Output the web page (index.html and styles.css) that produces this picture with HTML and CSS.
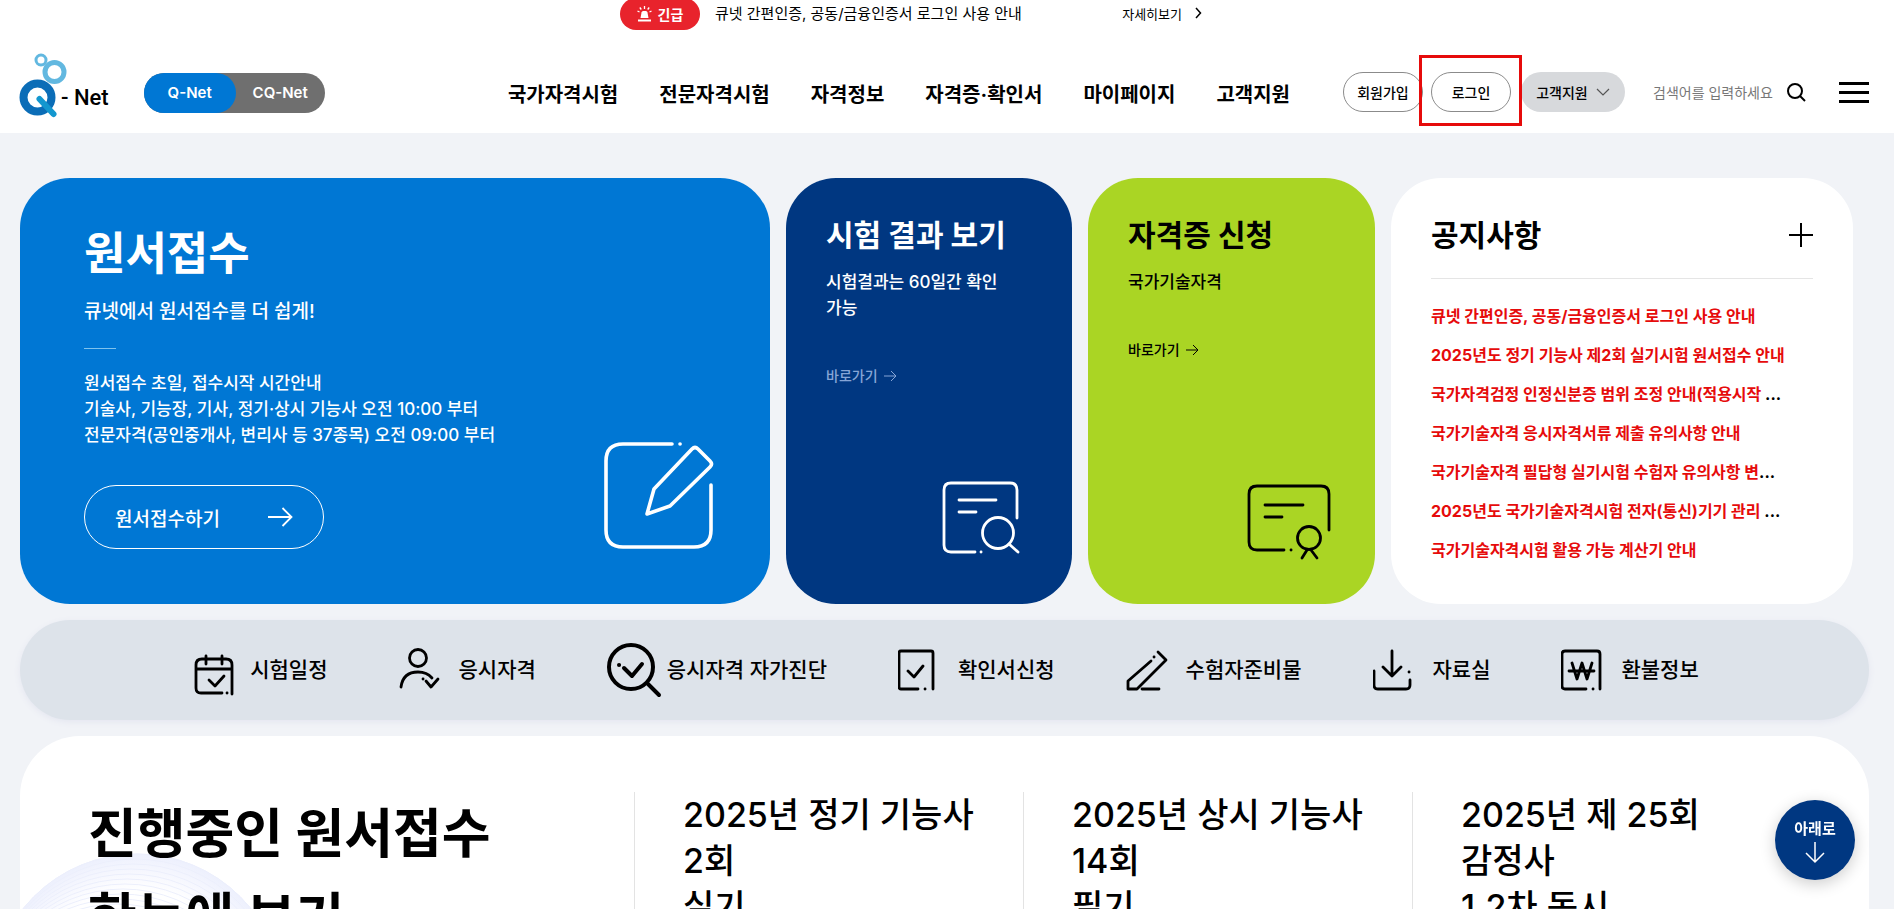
FILE: index.html
```html
<!DOCTYPE html>
<html lang="ko">
<head>
  <meta charset="UTF-8">
  <meta name="viewport" content="width=device-width, initial-scale=1.0">
  <title>Q-Net</title>
  <link rel="stylesheet" href="styles.css">
</head>
<body>
  <div class="top-notice">
    <div class="top-notice-inner">
      <strong class="badge">
        <svg width="15" height="16" viewBox="0 0 15 16" fill="#fff"><path d="M3.5 12l1-5.5q.3-1.5 1.600-1.500h2.800q1.300 0 1.600 1.500l1 5.500z"/><path d="M1 13.500h13v2H1z"/><path d="M7.500 0v3M2.800 1.500l1.500 2M12.200 1.500l-1.500 2M.5 5l2 1M14.500 5l-2 1" stroke="#fff" stroke-width="1.300"/></svg>
        긴급
      </strong>
      <a class="top-notice-text" href="#">큐넷 간편인증, 공동/금융인증서 로그인 사용 안내</a>
      <a class="top-notice-more" href="#">자세히보기
        <svg width="7" height="12" viewBox="0 0 7 12" fill="none" stroke="#000" stroke-width="1.500"><path d="M1 1l4.500 5L1 11"/></svg>
      </a>
    </div>
  </div>

  <header class="header">
    <a class="logo" href="#">
      <svg width="40" height="64" viewBox="0 0 40 64" fill="none">
        <circle cx="21" cy="7" r="5" stroke="#62b8e0" stroke-width="3"/>
        <circle cx="34.500" cy="19" r="9.500" stroke="#62b8e0" stroke-width="5"/>
        <circle cx="17.500" cy="44.500" r="14" stroke="#0b6db7" stroke-width="8"/>
        <path d="M19.500 46l14 15" stroke="#1397cf" stroke-width="6" stroke-linecap="round"/>
      </svg>
      <span>- Net</span>
    </a>
    <div class="site-toggle">
      <a class="active" href="#">Q-Net</a>
      <a href="#">CQ-Net</a>
    </div>
    <nav class="gnb">
      <a href="#">국가자격시험</a>
      <a href="#">전문자격시험</a>
      <a href="#">자격정보</a>
      <a href="#">자격증·확인서</a>
      <a href="#">마이페이지</a>
      <a href="#">고객지원</a>
    </nav>
    <div class="util">
      <button class="pill" type="button">회원가입</button>
      <div class="login"><button class="pill" type="button">로그인</button></div>
      <button class="pill pill-gray" type="button" aria-haspopup="true">고객지원
        <svg width="14" height="8" viewBox="0 0 14 8" fill="none" stroke="#555" stroke-width="1.200"><path d="M1 1l6 6 6-6"/></svg>
      </button>
      <form class="search">
        <input type="text" aria-label="검색어" placeholder="검색어를 입력하세요">
        <button type="submit" aria-label="검색">
          <svg width="19" height="19" viewBox="0 0 19 19" fill="none" stroke="#000" stroke-width="2"><circle cx="8" cy="8" r="7"/><path d="M13 13l5 5"/></svg>
        </button>
      </form>
      <button class="menu" type="button" aria-label="전체메뉴"><span></span><span></span><span></span></button>
    </div>
  </header>

  <main>
    <section class="cards">
      <article class="card card-apply">
        <h2>원서접수</h2>
        <p class="lead">큐넷에서 원서접수를 더 쉽게!</p>
        <p class="desc">원서접수 초일, 접수시작 시간안내<br>기술사, 기능장, 기사, 정기·상시 기능사 오전 10:00 부터<br>전문자격(공인중개사, 변리사 등 37종목) 오전 09:00 부터</p>
        <div class="card-foot">
          <a class="apply-btn" href="#">원서접수하기
            <svg width="25" height="20" viewBox="0 0 25 20" fill="none" stroke="#fff" stroke-width="1.800"><path d="M0 10h23M14.500 1l9 9-9 9"/></svg>
          </a>
          <svg width="110" height="108" viewBox="0 0 110 108" fill="none" stroke="#fff" stroke-width="3.600" stroke-linecap="round" stroke-linejoin="round">
            <path d="M68 3H19Q2 3 2 20v69q0 17 17 17h71q17 0 17-17V44M76 3h.1"/>
            <path d="M88 8q3-3 6 0l12 12q3 3 0 6L66 65l-23 8 7-25z"/>
          </svg>
        </div>
      </article>

      <article class="card card-side card-result">
        <h2>시험 결과 보기</h2>
        <p>시험결과는 60일간 확인<br>가능</p>
        <a class="go" href="#">바로가기
          <svg width="13" height="12" viewBox="0 0 13 12" fill="none" stroke="currentColor"><path d="M0 6h12M7 1l5 5-5 5"/></svg>
        </a>
        <svg class="card-icon" width="78" height="74" viewBox="0 0 78 74" fill="none" stroke="#fff" stroke-width="2.800" stroke-linecap="round">
          <path d="M33 71H9q-7 0-7-7V9q0-7 7-7h59q7 0 7 7v28M39 71h.1M17 19h37M17 31h17"/>
          <circle cx="56" cy="52" r="15.500"/><path d="M67 63l9 8"/>
        </svg>
      </article>

      <article class="card card-side card-license">
        <h2>자격증 신청</h2>
        <p>국가기술자격</p>
        <a class="go" href="#">바로가기
          <svg width="13" height="12" viewBox="0 0 13 12" fill="none" stroke="currentColor"><path d="M0 6h12M7 1l5 5-5 5"/></svg>
        </a>
        <svg class="card-icon" width="84" height="76" viewBox="0 0 84 76" fill="none" stroke="#000" stroke-width="2.800" stroke-linecap="round">
          <path d="M37 66H10q-8 0-8-8V10q0-8 8-8h64q8 0 8 8v36M44 66h.1M18 21h38M18 33h17"/>
          <circle cx="62" cy="54" r="11.500"/><path d="M60 66l-5 8M64 66l6 8"/>
        </svg>
      </article>

      <article class="card card-news">
        <div class="news-head">
          <h2>공지사항</h2>
          <a href="#" aria-label="공지사항 더보기"><svg width="24" height="24" viewBox="0 0 24 24" stroke="#000" stroke-width="2"><path d="M12 0v24M0 12h24"/></svg></a>
        </div>
        <ul>
          <li><a href="#">큐넷 간편인증, 공동/금융인증서 로그인 사용 안내</a></li>
          <li><a href="#">2025년도 정기 기능사 제2회 실기시험 원서접수 안내</a></li>
          <li><a href="#">국가자격검정 인정신분증 범위 조정 안내(적용시작 </a>...</li>
          <li><a href="#">국가기술자격 응시자격서류 제출 유의사항 안내</a></li>
          <li><a href="#">국가기술자격 필답형 실기시험 수험자 유의사항 변</a>...</li>
          <li><a href="#">2025년도 국가기술자격시험 전자(통신)기기 관리 </a>...</li>
          <li><a href="#">국가기술자격시험 활용 가능 계산기 안내</a></li>
        </ul>
      </article>
    </section>

    <nav class="quick">
      <a href="#"><svg width="60" height="60" viewBox="0 0 60 60"><path d="M32 53H11q-5 0-5-5V25q0-6 6-6h24q6 0 6 6v29M6 29h36M16 16v8M32 16v8M37 53h.1M19 40l6 6 9-10"/></svg><span>시험일정</span></a>
      <a href="#"><svg width="60" height="60" viewBox="0 0 60 60"><circle cx="19" cy="18" r="8.500"/><path d="M2 47q2-15 17-15 9 0 14 6M27 41l5 6 7-8M24 39h.1"/></svg><span>응시자격</span></a>
      <a href="#"><svg class="bold" width="60" height="60" viewBox="0 0 60 60"><circle cx="24" cy="27" r="22"/><path d="M41 44l11 11M17 28l8 8 10-12M12 25h.1"/></svg><span>응시자격 자가진단</span></a>
      <a href="#"><svg width="60" height="60" viewBox="0 0 60 60"><path d="M20 49H3q-2 0-2-2V13q0-2 2-2h30q2 0 2 2v36M27 49h.1M10 31l6 6 9-11"/></svg><span>확인서신청</span></a>
      <a href="#"><svg width="60" height="60" viewBox="0 0 60 60"><path d="M25 21L2 41v8h9l29-29-8-8M16 49h17M28 17h.1"/></svg><span>수험자준비물</span></a>
      <a href="#"><svg width="60" height="60" viewBox="0 0 60 60"><path d="M19 11v25M10 27l9 9 9-9M1 31v14q0 4 4 4h28q4 0 4-4v-5M36 32h.1"/></svg><span>자료실</span></a>
      <a href="#"><svg width="60" height="60" viewBox="0 0 60 60"><path d="M25 49H4q-3 0-3-3V14q0-3 3-3h32q3 0 3 3v35M32 49h.1M11 23l5 16 5-16 5 16 5-16M8 31h25"/></svg><span>환불정보</span></a>
    </nav>

    <section class="ongoing">
      <svg class="wave" width="320" height="320" viewBox="0 0 320 320" fill="none" aria-hidden="true">
        <defs>
          <radialGradient id="glow">
            <stop offset="0.75" stop-color="#eef0fe" stop-opacity="0"/>
            <stop offset="1" stop-color="#edf0fd"/>
          </radialGradient>
        </defs>
        <circle cx="157" cy="156" r="146" fill="url(#glow)"/>
        <g id="rings"></g>
      </svg>
      <h2>진행중인 원서접수<br>한눈에 보기</h2>
      <a class="exam" href="#">2025년 정기 기능사 2회<br>실기</a>
      <a class="exam" href="#">2025년 상시 기능사 14회<br>필기</a>
      <a class="exam" href="#">2025년 제 25회 감정사<br>1,2차 동시</a>
    </section>
  </main>

  <button class="down" type="button">아래로
    <svg width="20" height="22" viewBox="0 0 20 22" fill="none" stroke="#fff" stroke-width="1.500"><path d="M10 0v20M1 11l9 9 9-9"/></svg>
  </button>

  <script>
    // thin rings that drift to the lower left to make the wave
    let rings = '';
    for (let i = 0; i < 24; i++) {
      rings += `<circle cx="${157 - i * 2}" cy="${156 + i * 4}" r="${146 - i}"/>`;
    }
    document.getElementById('rings').innerHTML = rings;
  </script>
</body>
</html>
```
FILE: styles.css
```css
:root {
  --blue: #0077d4;
  --navy: #003781;
  --green: #aad524;
  --bg: #f1f3f7;
  --red: #e60b0b;
}
*, *::after { box-sizing:border-box; }
body { margin:0; background:var(--bg); color:#000; font-family:Inter,"Noto Sans CJK KR",sans-serif; font-size:16px; word-break:keep-all; overflow-x:hidden; }
a { color:inherit; text-decoration:none; }
h2, p, ul { margin:0; padding:0; }
ul { list-style:none; }
button, input { font-family:inherit; color:inherit; padding:0; border:0; background:none; }
svg { flex:none; }

.top-notice { height:28px; background:#fff; }
.top-notice-inner { display:flex; align-items:center; width:654px; height:28px; margin:0 auto; white-space:nowrap; }
.badge { display:flex; align-items:center; justify-content:center; gap:6px; width:80px; height:32px; border-radius:16px; background:#e8232c; color:#fff; font-size:14px; }
.top-notice-text { margin-left:15px; padding-bottom:4px; font-size:15px; font-weight:400; }
.top-notice-more { display:flex; align-items:center; gap:13px; margin-left:auto; margin-right:72px; padding-bottom:2px; font-size:13px; }

.header { display:flex; align-items:center; height:105px; padding:25px 25px 0 20px; background:#fff; white-space:nowrap; }
.logo { display:flex; align-items:flex-end; height:80px; padding-bottom:16px; }
.logo svg { overflow:visible; }
.logo span { margin-left:1px; font:500 22px/38px Roboto,sans-serif; }
.site-toggle { display:flex; width:181px; height:40px; margin-left:35px; border-radius:20px; background:#6f6f6f; color:#fff; font-size:15px; font-weight:600; line-height:40px; text-align:center; }
.site-toggle a { flex:1; }
.site-toggle .active { flex:none; width:92px; border-radius:20px; background:var(--blue); }
.gnb { display:flex; gap:41px; margin-left:auto; font-size:20px; font-weight:700; }
.util { display:flex; align-items:center; margin-left:53px; padding-bottom:2px; }
.pill { width:80px; height:40px; border:1px solid #8b8b8b; border-radius:20px; font-size:14px; font-weight:500; }
.login { position:relative; margin:0 10px 0 8px; }
.login::after { content:""; position:absolute; left:-12px; top:-17px; width:103px; height:71px; border:3px solid var(--red); pointer-events:none; }
.pill-gray { display:flex; align-items:center; justify-content:center; gap:8px; width:104px; border:0; background:#d7d9dc; }
.search { display:flex; align-items:center; margin-left:28px; }
.search input { width:134px; height:40px; font-size:14px; outline:0; }
.search input::placeholder { color:#777; opacity:1; }
.search svg { display:block; }
.menu { display:flex; flex-direction:column; gap:6px; width:30px; margin-left:33px; }
.menu span { height:3px; background:#000; }

.cards { display:grid; grid-template-columns:750fr 286fr 287fr 462fr; gap:16px; padding:45px 41px 0 20px; }
.card { display:flex; flex-direction:column; min-height:426px; border-radius:50px; }
.card h2 { font-size:30px; line-height:44px; font-weight:700; }
.card-apply { padding:44px 56px 55px 64px; background:var(--blue); color:#fff; }
.card-apply h2 { font-size:45px; line-height:64px; }
.card-apply .lead { margin-top:12px; font-size:19px; line-height:28px; font-weight:500; }
.card-apply .lead::after { content:""; display:block; width:32px; height:1px; margin-top:22px; background:#7fc3ee; }
.card-apply .desc { margin-top:21px; font-size:17px; line-height:26px; font-weight:500; }
.card-foot { display:flex; align-items:flex-end; justify-content:space-between; margin-top:auto; }
.card-foot > svg { margin-top:-60px; }
.apply-btn { display:flex; align-items:center; justify-content:space-between; width:240px; height:64px; padding:0 30px; border:1px solid #fff; border-radius:32px; font-size:19px; font-weight:500; }
.card-side { padding:35px 40px 44px; }
.card-side p { margin-top:12px; font-size:17px; line-height:26px; font-weight:500; }
.go { display:flex; align-items:center; gap:6px; margin-top:45px; font-size:14px; line-height:20px; font-weight:500; }
.card-icon { margin:auto 4px 0 auto; }
.card-result { padding-right:48px; padding-bottom:49px; background:var(--navy); color:#fff; }
.card-result .go { color:#86a5d6; }
.card-license { background:var(--green); }
.card-news { padding:35px 40px 20px; background:#fff; }
.news-head { display:flex; align-items:center; justify-content:space-between; padding-bottom:21px; border-bottom:1px solid #e5e5e5; }
.news-head svg { display:block; }
.card-news ul { margin-top:18px; font-size:16px; line-height:39px; font-weight:700; white-space:nowrap; }
.card-news li a { color:var(--red); }

.quick { display:flex; align-items:center; justify-content:center; gap:71px; height:100px; margin:16px 25px 0 20px; border-radius:50px; background:#dde3ea; box-shadow:0 2px 6px #e4e6f0; font-size:21px; font-weight:500; white-space:nowrap; }
.quick a { display:flex; align-items:center; }
.quick span { padding-bottom:4px; }
.quick svg { fill:none; stroke:#000; stroke-width:2.8; stroke-linecap:round; stroke-linejoin:round; }
.quick .bold { stroke-width:4; }

.ongoing { position:relative; display:grid; grid-template-columns:546fr 389fr 389fr 389fr; margin:16px 25px 0 20px; padding:56px 68px 56px; border-radius:60px; background:#fff; overflow:hidden; }
.ongoing h2 { position:relative; font-size:53px; line-height:84px; font-weight:700; }
.wave { position:absolute; left:-40px; top:108px; stroke:#eceffc; }
.exam { padding-left:48px; padding-right:40px; border-left:1px solid #e3e3e3; font-size:34px; line-height:46px; font-weight:500; min-height:300px; }

.down { position:fixed; right:39px; bottom:29px; display:flex; flex-direction:column; align-items:center; justify-content:center; gap:4px; width:80px; height:80px; border-radius:50%; background:var(--navy); color:#fff; font-size:15px; font-weight:700; box-shadow:0 4px 16px #0003; }
```
